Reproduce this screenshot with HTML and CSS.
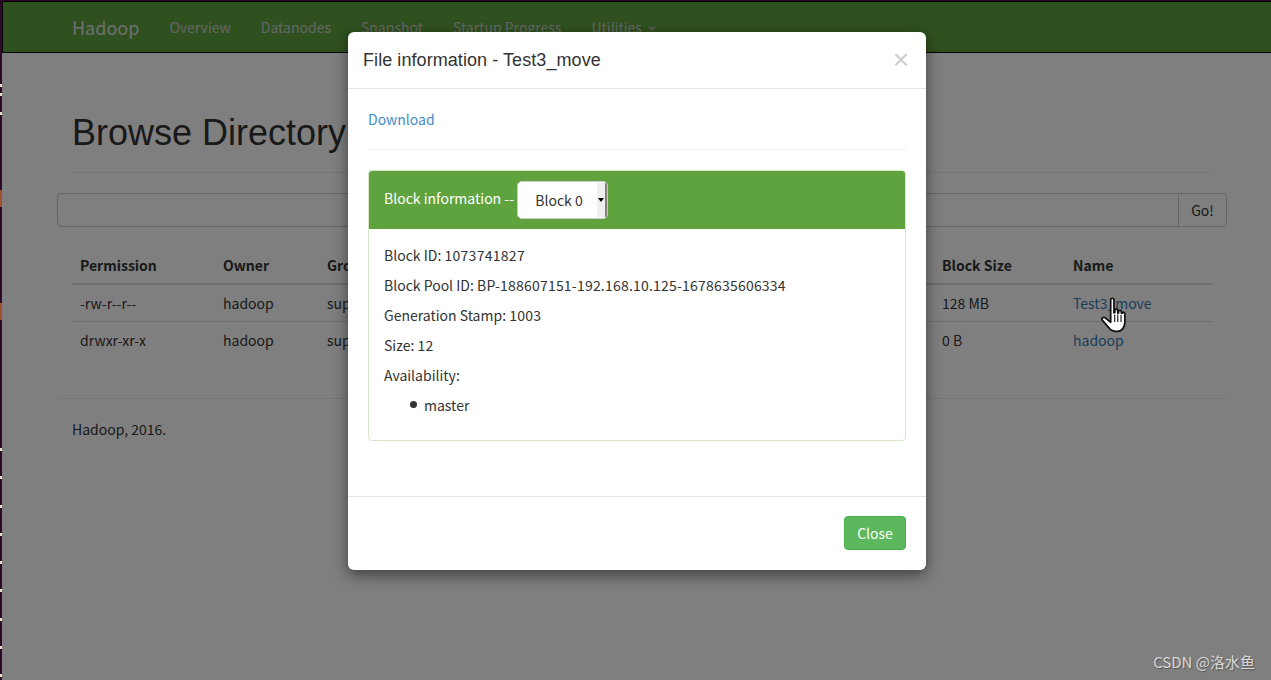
FILE: index.html
```html
<!DOCTYPE html>
<html lang="en">
<head>
    <meta charset="UTF-8">
    <meta name="viewport" content="width=device-width, initial-scale=1.0">
    <title>Browsing HDFS</title>
    <link rel="stylesheet" href="styles.css">
</head>
<body>
    <div class="desktop-edge"></div>
    <div class="browser-window">
        <nav class="navbar">
            <a class="brand" href="#">Hadoop</a>
            <ul class="nav-links">
                <li><a href="#">Overview</a></li>
                <li><a href="#">Datanodes</a></li>
                <li><a href="#">Snapshot</a></li>
                <li><a href="#">Startup Progress</a></li>
                <li><a href="#">Utilities <span class="caret"></span></a></li>
            </ul>
        </nav>

        <div class="container">
            <div class="page-header">
                <h1>Browse Directory</h1>
            </div>

            <div class="input-group">
                <input class="path-input" type="text">
                <button class="go-button">Go!</button>
            </div>

            <table class="file-table">
                <colgroup>
                    <col class="col-permission">
                    <col class="col-owner">
                    <col class="col-group">
                    <col class="col-blocksize">
                    <col class="col-name">
                </colgroup>
                <thead>
                    <tr>
                        <th>Permission</th>
                        <th>Owner</th>
                        <th>Group</th>
                        <th>Block Size</th>
                        <th>Name</th>
                    </tr>
                </thead>
                <tbody>
                    <tr>
                        <td>-rw-r--r--</td>
                        <td>hadoop</td>
                        <td>supergroup</td>
                        <td>128 MB</td>
                        <td><a href="#">Test3_move</a></td>
                    </tr>
                    <tr>
                        <td>drwxr-xr-x</td>
                        <td>hadoop</td>
                        <td>supergroup</td>
                        <td>0 B</td>
                        <td><a href="#">hadoop</a></td>
                    </tr>
                </tbody>
            </table>

            <hr class="footer-line">
            <p class="footer-text">Hadoop, 2016.</p>
        </div>

        <!-- Hand cursor over the file link -->
        <svg class="hand-cursor" width="29" height="37" viewBox="0 0 26 34">
            <path d="M9.500 2.500c0-1.800 3-1.800 3 0v12l.8-.2v-2c0-1.500 2.700-1.500 2.700 0v2.500l.7.100v-1.500c0-1.500 2.600-1.500 2.600 0v1.500l.7.100c0-1.300 2.500-1.300 2.500 .2v7.800c0 4.800-2.500 8.500-6.800 8.500h-2.200c-2.800 0-4.300-1.200-5.800-3.400L1.800 21.300c-1.200-1.700 1-3.500 2.700-2.100l5 4z" fill="#fff" stroke="#111" stroke-width="1.600" stroke-linejoin="round"/>
            <path d="M13.200 16v7M16 16v7M19 16.500v6.500" stroke="#111" stroke-width="1" fill="none"/>
        </svg>

        <div class="backdrop"></div>

        <div class="modal">
            <div class="modal-header">
                <h4>File information - Test3_move</h4>
                <span class="close-x">&times;</span>
            </div>
            <div class="modal-body">
                <a class="download-link" href="#">Download</a>
                <hr class="modal-line">
                <div class="panel">
                    <div class="panel-heading">
                        <span>Block information --</span>
                        <div class="block-select">
                            <span class="block-select-label">Block 0</span>
                            <span class="block-select-arrow"></span>
                        </div>
                    </div>
                    <div class="panel-body">
                        <p>Block ID: <span class="number">1073741827</span></p>
                        <p>Block Pool ID: <span class="pool-id">BP-188607151-192.168.10.125-1678635606334</span></p>
                        <p>Generation Stamp: <span class="number">1003</span></p>
                        <p>Size: <span class="number">12</span></p>
                        <p>Availability:</p>
                        <ul>
                            <li>master</li>
                        </ul>
                    </div>
                </div>
            </div>
            <div class="modal-footer">
                <button class="close-button">Close</button>
            </div>
        </div>

        <div class="watermark">CSDN @洛水鱼</div>
    </div>
</body>
</html>
```

FILE: styles.css
```css
* {
    box-sizing: border-box;
}
html, body {
    height: 100%;
}
body {
    margin: 0;
    display: flex;
    overflow: hidden;
    background-color: #2c0a26;
    font-family: "Noto Sans CJK SC", sans-serif;
    font-size: 14px;
    line-height: 20px;
    color: #333;
}
a {
    color: #337ab7;
    text-decoration: none;
}
/* Bit of the desktop showing at the left of the window */
.desktop-edge {
    width: 2px;
    flex: none;
    background:
        linear-gradient(#e9dcc8, #e9dcc8) 0 84px / 2px 3px no-repeat,
        linear-gradient(#e9dcc8, #e9dcc8) 0 93px / 2px 3px no-repeat,
        linear-gradient(#e9dcc8, #e9dcc8) 0 112px / 2px 3px no-repeat,
        linear-gradient(#a0522d, #a0522d) 0 190px / 2px 17px no-repeat,
        linear-gradient(#a0522d, #a0522d) 0 303px / 2px 17px no-repeat,
        repeating-linear-gradient(#e9dcc8 0 3px, #2c0a26 3px 28.3px) 0 448px no-repeat;
}
.browser-window {
    position: relative;
    flex: 1;
    min-width: 0;
    margin-top: 1px;
    overflow: hidden;
    background-color: #fff;
}

/* Navbar */
.navbar {
    display: flex;
    align-items: center;
    height: 52px;
    padding-left: 69px;
    background-color: #5fa33e;
    border: 1px solid #000;
    border-right: none;
}
.brand {
    font-size: 18px;
    color: #ddd;
}
.nav-links {
    display: flex;
    margin: 0 0 0 15px;
    padding: 0;
    list-style: none;
}
.nav-links a {
    display: block;
    padding: 0 15px;
    color: #ccc;
}
.caret {
    display: inline-block;
    margin-left: 3px;
    vertical-align: middle;
    border-top: 4px solid #b5a8a8;
    border-left: 4px solid transparent;
    border-right: 4px solid transparent;
}

/* Page */
.container {
    width: 1170px;
    margin-left: 55px;
    padding: 0 15px;
}
.page-header {
    margin-top: 40px;
    padding-bottom: 9px;
    height: 80px;
    border-bottom: 1px solid #eee;
}
.page-header h1 {
    margin: 0;
    padding-top: 20px;
    font-family: "Liberation Sans", sans-serif;
    font-size: 36px;
    font-weight: 500;
    line-height: 40px;
}
.input-group {
    display: flex;
    height: 34px;
    margin: 20px -15px 0;
}
.path-input {
    flex: 1;
    border: 1px solid #ccc;
    border-radius: 4px 0 0 4px;
    background-color: #fff;
}
.go-button {
    width: 49px;
    margin-left: -1px;
    border: 1px solid #ccc;
    border-radius: 0 4px 4px 0;
    background-color: #fff;
    font: inherit;
    color: #333;
}

/* File table */
.file-table {
    width: 100%;
    margin-top: 20px;
    border-collapse: collapse;
    table-layout: fixed;
}
.col-permission { width: 143px; }
.col-owner { width: 104px; }
.col-blocksize { width: 131px; }
.col-name { width: 147px; }
.file-table th {
    padding: 8px;
    text-align: left;
    border-bottom: 2px solid #ddd;
}
.file-table td {
    padding: 8px;
    border-top: 1px solid #ddd;
}
.file-table tbody tr:first-child td {
    border-top: none;
}
.footer-line {
    margin: 40px -15px 0;
    border: none;
    border-top: 1px solid #eee;
}
.footer-text {
    margin: 20px 0 0;
}

/* Cursor sits above the backdrop like the real pointer */
.hand-cursor {
    position: absolute;
    left: 1098px;
    top: 296px;
    z-index: 20;
}

/* Modal */
.backdrop {
    position: absolute;
    top: -1px;
    left: 0;
    right: 0;
    bottom: 0;
    z-index: 10;
    background-color: rgba(0, 0, 0, 0.5);
}
.modal {
    position: absolute;
    top: 31px;
    left: 346px;
    width: 578px;
    z-index: 15;
    background-color: #fff;
    border-radius: 6px;
    box-shadow: 0 5px 15px rgba(0, 0, 0, 0.5);
}
.modal-header {
    display: flex;
    justify-content: space-between;
    align-items: center;
    height: 57px;
    padding: 0 17px 0 15px;
    border-bottom: 1px solid #e5e5e5;
}
.modal-header h4 {
    margin: 0;
    font-family: "Liberation Sans", sans-serif;
    font-size: 18px;
    font-weight: 500;
    letter-spacing: 0.07px;
}
.close-x {
    font-family: "Liberation Sans", sans-serif;
    font-size: 28px;
    line-height: 20px;
    color: #ccc;
}
.modal-body {
    padding: 20px;
    height: 407px;
}
.download-link {
    display: block;
    color: #428bca;
}
.modal-line {
    margin: 20px 0;
    border: none;
    border-top: 1px solid #eee;
}
.panel {
    height: 271px;
    border: 1px solid #d6e9c6;
    border-radius: 4px;
}
.panel-heading {
    display: flex;
    align-items: center;
    gap: 3px;
    height: 58px;
    padding: 0 15px 4px;
    color: #fff;
    background-color: #5fa33e;
    border-radius: 3px 3px 0 0;
}
.block-select {
    display: flex;
    flex: none;
    width: 91px;
    height: 38px;
    margin-top: 4px;
    overflow: hidden;
    background-color: #fff;
    border: 1px solid #ccc;
    border-radius: 5px;
    color: #333;
}
.block-select-label {
    flex: 1;
    line-height: 37px;
    text-align: center;
    padding-left: 3px;
}
.block-select-arrow {
    position: relative;
    width: 10px;
    margin: 1px 0;
    background-color: #f0f0f0;
    border-right: 2px solid #808080;
}
.block-select-arrow::after {
    content: "";
    position: absolute;
    top: 15px;
    left: 1px;
    border-top: 4px solid #000;
    border-left: 3.500px solid transparent;
    border-right: 3.500px solid transparent;
}
.panel-body {
    padding: 16px 15px 15px;
}
.panel-body p {
    margin: 0 0 10px;
}
.number {
    letter-spacing: 0.28px;
}
.pool-id {
    letter-spacing: 0.21px;
}
.panel-body ul {
    margin: 0;
    padding-left: 40px;
    list-style: none;
}
.panel-body li {
    position: relative;
}
.panel-body li::before {
    content: "";
    position: absolute;
    left: -14px;
    top: 6px;
    width: 7px;
    height: 7px;
    border-radius: 50%;
    background-color: #333;
}
.modal-footer {
    display: flex;
    justify-content: flex-end;
    height: 74px;
    padding: 19px 20px 20px;
    border-top: 1px solid #e5e5e5;
}
.close-button {
    width: 62px;
    height: 34px;
    background-color: #5cb85c;
    border: 1px solid #4cae4c;
    border-radius: 4px;
    font: inherit;
    color: #fff;
}
.watermark {
    position: absolute;
    right: 16px;
    bottom: 8px;
    z-index: 20;
    font-size: 15px;
    color: #d8d8d8;
    text-shadow: 1px 1px 1px #555;
}
```
